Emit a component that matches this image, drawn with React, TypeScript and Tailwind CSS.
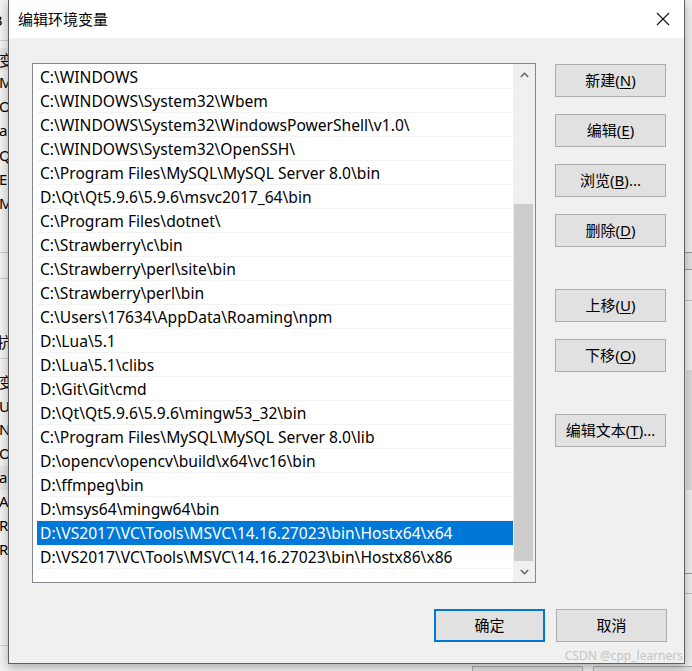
const paths = [
  "C:\\WINDOWS",
  "C:\\WINDOWS\\System32\\Wbem",
  "C:\\WINDOWS\\System32\\WindowsPowerShell\\v1.0\\",
  "C:\\WINDOWS\\System32\\OpenSSH\\",
  "C:\\Program Files\\MySQL\\MySQL Server 8.0\\bin",
  "D:\\Qt\\Qt5.9.6\\5.9.6\\msvc2017_64\\bin",
  "C:\\Program Files\\dotnet\\",
  "C:\\Strawberry\\c\\bin",
  "C:\\Strawberry\\perl\\site\\bin",
  "C:\\Strawberry\\perl\\bin",
  "C:\\Users\\17634\\AppData\\Roaming\\npm",
  "D:\\Lua\\5.1",
  "D:\\Lua\\5.1\\clibs",
  "D:\\Git\\Git\\cmd",
  "D:\\Qt\\Qt5.9.6\\5.9.6\\mingw53_32\\bin",
  "C:\\Program Files\\MySQL\\MySQL Server 8.0\\lib",
  "D:\\opencv\\opencv\\build\\x64\\vc16\\bin",
  "D:\\ffmpeg\\bin",
  "D:\\msys64\\mingw64\\bin",
  "D:\\VS2017\\VC\\Tools\\MSVC\\14.16.27023\\bin\\Hostx64\\x64",
  "D:\\VS2017\\VC\\Tools\\MSVC\\14.16.27023\\bin\\Hostx86\\x86",
];

const selected = 19;

// bits of the window behind the dialog, left edge
const behindLeft = [
  { text: "变", top: 50 },
  { text: "MY", top: 72 },
  { text: "Or", top: 96 },
  { text: "a", top: 120 },
  { text: "Qt", top: 145 },
  { text: "E", top: 169 },
  { text: "M", top: 193 },
  { text: "变", top: 372 },
  { text: "U", top: 396 },
  { text: "NU", top: 419 },
  { text: "OS", top: 443 },
  { text: "a", top: 467 },
  { text: "A", top: 491 },
  { text: "R", top: 515 },
  { text: "R", top: 539 },
];

function DialogButton({ label, mnemonic, suffix = "", primary = false }: { label: string; mnemonic?: string; suffix?: string; primary?: boolean }) {
  return (
    <button
      className={
        primary
          ? "flex h-[33px] w-[111px] items-center justify-center border-2 border-[#0078d7] bg-[#e1e1e1] text-[15px] text-black"
          : "flex h-[33px] w-[111px] items-center justify-center border border-[#adadad] bg-[#e1e1e1] text-[15px] text-black"
      }
    >
      {label}
      {mnemonic && (
        <>
          (<span className="underline underline-offset-2">{mnemonic}</span>){suffix}
        </>
      )}
    </button>
  );
}

function Chevron({ down = false }: { down?: boolean }) {
  return (
    <svg width="9" height="6" viewBox="0 0 9 6" className={down ? "rotate-180" : ""}>
      <polyline points="0.8,5 4.5,1.2 8.2,5" fill="none" stroke="#606060" strokeWidth="1.4" />
    </svg>
  );
}

export default function App() {
  return (
    <div className="relative h-[671px] w-[692px] overflow-hidden bg-[#f0f0f0] font-['Noto_Sans','Noto_Sans_CJK_SC',sans-serif]">
      {/* window behind, left */}
      <div className="absolute left-0 top-0 h-full w-[8px] overflow-hidden bg-[#f3f3f3]">
        <div className="absolute left-[-6px] top-[10px] whitespace-nowrap text-[15px] leading-[20px] text-black">3</div>
        <div className="absolute left-0 top-[40px] h-px w-full bg-[#d0d0d0]" />
        <div className="absolute left-0 top-[48px] h-[22px] w-full bg-[#e6e6e6]" />
        <div className="absolute left-0 top-[252px] h-px w-full bg-[#c8c8c8]" />
        <div className="absolute left-0 top-[278px] h-px w-full bg-[#c8c8c8]" />
        <div className="absolute left-[-3px] top-[332px] whitespace-nowrap text-[15px] leading-[20px] text-black">抗</div>
        <div className="absolute left-0 top-[358px] h-px w-full bg-[#d0d0d0]" />
        <div className="absolute left-0 top-[466px] h-[24px] w-full bg-[#e6e6e6]" />
        <div className="absolute left-0 top-[645px] h-px w-full bg-[#d0d0d0]" />
        {behindLeft.map((f) => (
          <div
            key={f.top}
            className="absolute left-[-1px] whitespace-nowrap text-[15px] leading-[20px] text-black"
            style={{ top: f.top }}
          >
            {f.text}
          </div>
        ))}
      </div>

      {/* window behind, right */}
      <div className="absolute right-0 top-0 h-full w-[12px] bg-[#f0f0f0]">
        <div className="absolute left-0 top-[252px] h-[18px] w-full border-y border-[#9a9a9a] bg-[#e3e3e3]" />
        <div className="absolute left-0 top-[300px] h-px w-full bg-[#c0c0c0]" />
        <div className="absolute left-[6px] top-[370px] h-[120px] w-[6px] bg-[#dadada]" />
        <div className="absolute left-0 top-[573px] h-px w-full bg-[#9a9a9a]" />
        <div className="absolute left-0 top-[593px] h-px w-full bg-[#c0c0c0]" />
      </div>

      {/* window behind, bottom */}
      <div className="absolute left-[472px] top-[666px] h-[12px] w-[111px] border border-[#adadad] bg-[#e1e1e1]" />
      <div className="absolute left-[593px] top-[666px] h-[12px] w-[111px] border border-[#adadad] bg-[#e1e1e1]" />

      {/* dialog */}
      <div className="absolute left-[8px] top-0 flex h-[664px] w-[677px] flex-col border-x border-b border-[#606060] shadow-[0_3px_10px_rgba(0,0,0,0.3)]">
        <div className="flex h-[38px] items-center justify-between bg-white pl-[9px]">
          <span className="text-[15px] text-black">编辑环境变量</span>
          <div className="flex h-full w-[42px] items-center justify-center">
            <svg width="14" height="14" viewBox="0 0 14 14">
              <path d="M1 1L13 13M13 1L1 13" stroke="#111" strokeWidth="1.1" />
            </svg>
          </div>
        </div>

        <div className="flex flex-1 flex-col bg-[#f0f0f0] pl-[23px] pr-[17px] pt-[25px]">
          <div className="flex">
            <div className="flex h-[520px] w-[504px] border border-[#828790] bg-white">
              <div className="flex-1 pl-[4px] pt-px">
                {paths.map((p, i) => (
                  <div
                    key={p}
                    className={
                      i === selected
                        ? "flex h-[24px] items-center whitespace-nowrap bg-[#0078d7] pl-[3px] pt-[2px] text-[15.6px] text-white"
                        : "flex h-[24px] items-center whitespace-nowrap border-b border-[#f3f3f3] pl-[3px] pt-[2px] text-[15.6px] text-black"
                    }
                  >
                    {p}
                  </div>
                ))}
              </div>
              <div className="flex w-[22px] flex-col bg-[#f0f0f0]">
                <div className="flex h-[22px] items-center justify-center">
                  <Chevron />
                </div>
                <div className="h-[118px]" />
                <div className="ml-px w-[19px] flex-1 bg-[#cdcdcd]" />
                <div className="flex h-[21px] items-center justify-center">
                  <Chevron down />
                </div>
              </div>
            </div>

            <div className="ml-[19px] flex flex-col pt-px">
              <DialogButton label="新建" mnemonic="N" />
              <div className="mt-[17px]">
                <DialogButton label="编辑" mnemonic="E" />
              </div>
              <div className="mt-[17px]">
                <DialogButton label="浏览" mnemonic="B" suffix="..." />
              </div>
              <div className="mt-[17px]">
                <DialogButton label="删除" mnemonic="D" />
              </div>
              <div className="mt-[42px]">
                <DialogButton label="上移" mnemonic="U" />
              </div>
              <div className="mt-[17px]">
                <DialogButton label="下移" mnemonic="O" />
              </div>
              <div className="mt-[42px]">
                <DialogButton label="编辑文本" mnemonic="T" suffix="..." />
              </div>
            </div>
          </div>

          <div className="mt-[26px] flex justify-end gap-[11px]">
            <DialogButton label="确定" primary />
            <DialogButton label="取消" />
          </div>
        </div>
      </div>

      <div className="absolute right-[9px] top-[647px] text-[12px] leading-[18px] text-[#c4c4c4]">
        CSDN @cpp_learners
      </div>
    </div>
  );
}
